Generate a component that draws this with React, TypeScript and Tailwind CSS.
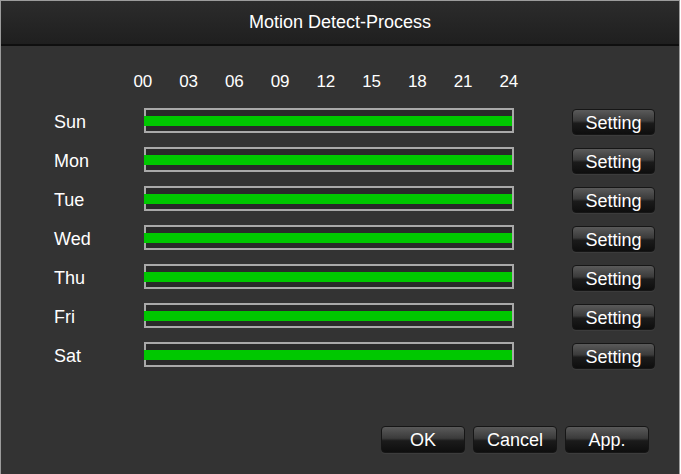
import React from 'react';

const days = ['Sun', 'Mon', 'Tue', 'Wed', 'Thu', 'Fri', 'Sat'];
const hours = ['00', '03', '06', '09', '12', '15', '18', '21', '24'];

const btn =
    'flex items-center justify-center rounded-[4px] border border-[#161616] text-white text-[18px] leading-none pt-[1px] ' +
    'bg-[linear-gradient(to_bottom,#5a5a5a_0%,#3b3b3b_45%,#1b1b1b_55%,#0e0e0e_100%)] shadow-[0_1px_0_#3c3c3c]';

export default function App() {
    return (
        <div
            className="w-[681px] h-[474px] bg-white"
            style={{ fontFamily: '"Liberation Sans", Arial, sans-serif' }}
        >
            <div className="w-[680px] h-[474px] flex flex-col bg-[#333333] border-l border-t border-r border-[#9c9c9c] overflow-hidden">
                {/* Title */}
                <div className="h-[45px] shrink-0 flex items-center justify-center border-b-2 border-[#0f0f0f] bg-[linear-gradient(to_bottom,#2c2c2c,#1f1f1f)]">
                    <span className="text-white text-[18px]">Motion Detect-Process</span>
                </div>

                {/* Hour scale */}
                <div className="flex mt-[26px] pl-[119px] h-[20px] items-center">
                    {hours.map(h => (
                        <span key={h} className="w-[45.75px] shrink-0 text-center text-white text-[17px] leading-[20px]">{h}</span>
                    ))}
                </div>

                {/* Day rows */}
                <div className="flex flex-col mt-[16px]">
                    {days.map(d => (
                        <div key={d} className="flex items-start h-[39px] pl-[53px]">
                            <div className="w-[90px] h-[25px] flex items-center pt-[3px] text-white text-[18px]">{d}</div>
                            <div className="w-[370px] h-[25px] border-2 border-[#a9a9a9] bg-[#2a2a2a] flex items-center">
                                <div className="h-[10px] w-[calc(100%+2px)] shrink-0 bg-[#00c800] -ml-[2px] mt-[1px]" />
                            </div>
                            <button className={`${btn} ml-[58px] mt-[1px] w-[83px] h-[26px]`}>Setting</button>
                        </div>
                    ))}
                </div>

                {/* Footer buttons */}
                <div className="flex justify-end gap-[8px] mt-[45px] pr-[30px]">
                    <button className={`${btn} w-[84px] h-[27px]`}>OK</button>
                    <button className={`${btn} w-[84px] h-[27px]`}>Cancel</button>
                    <button className={`${btn} w-[84px] h-[27px]`}>App.</button>
                </div>
            </div>
        </div>
    );
}
